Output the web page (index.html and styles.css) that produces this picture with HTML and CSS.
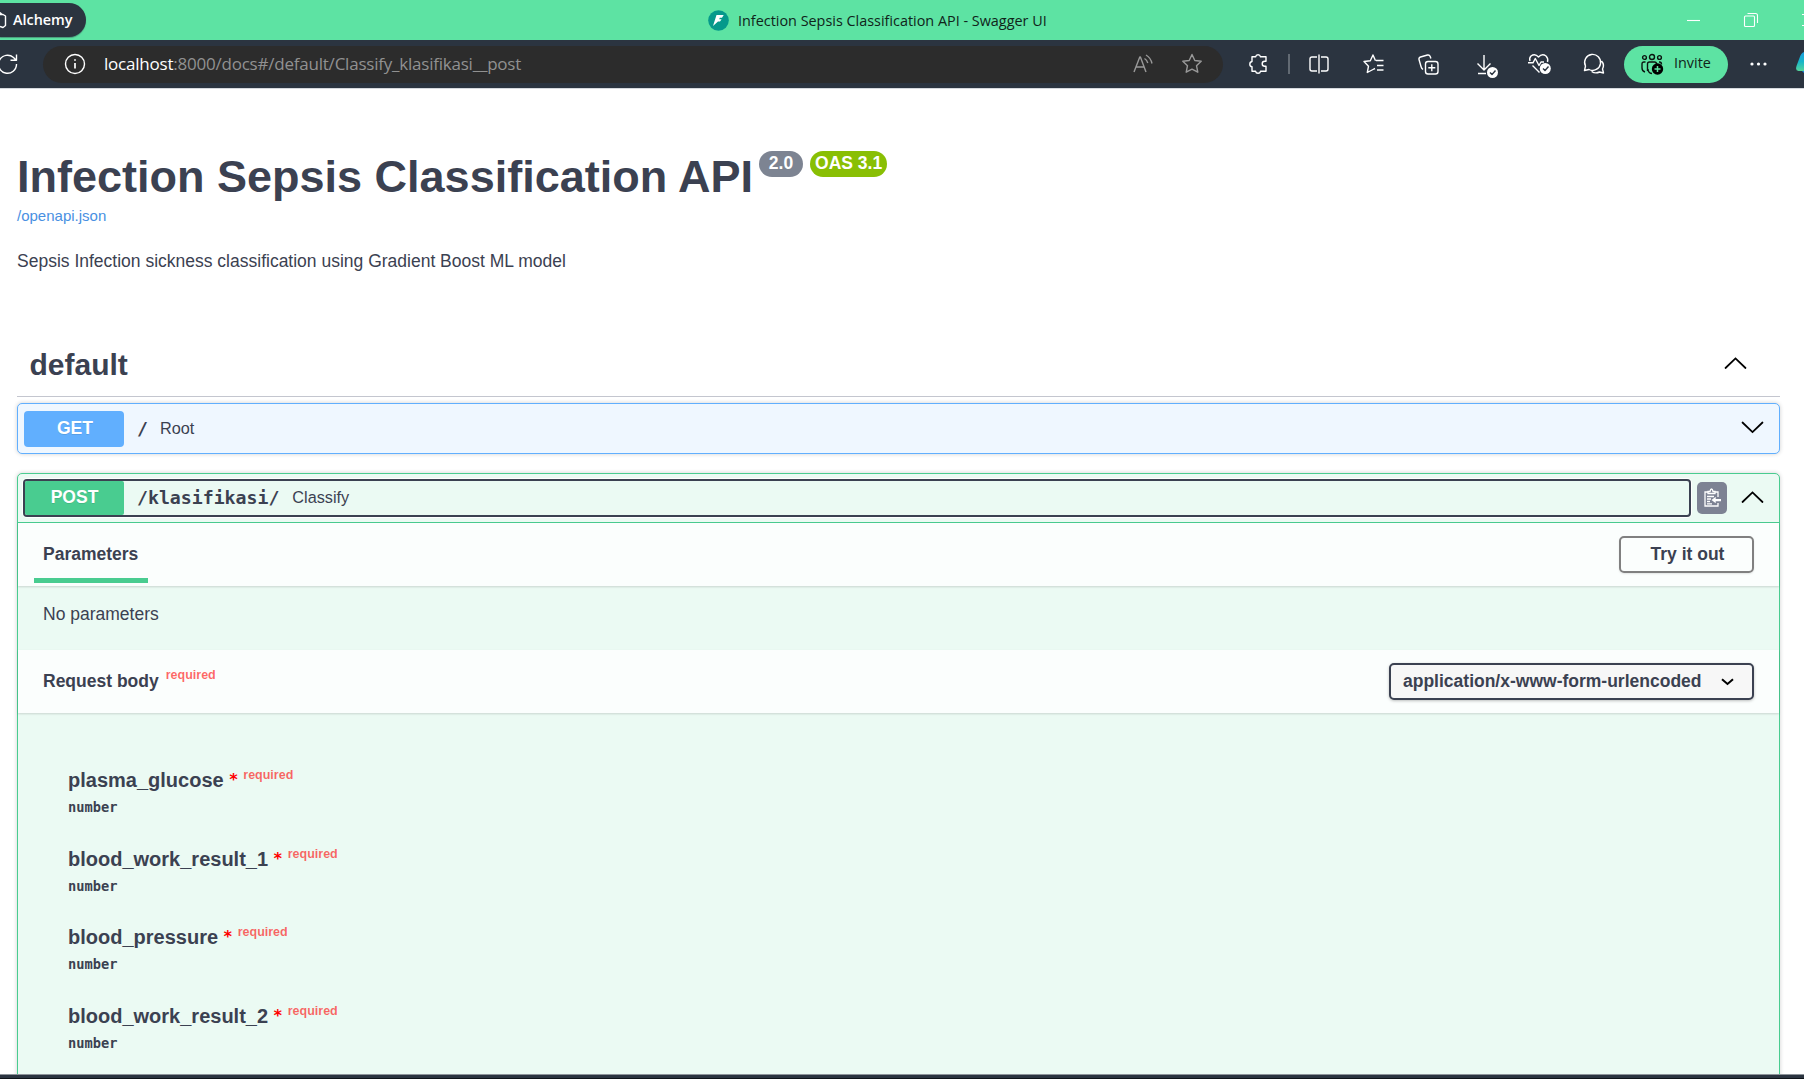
FILE: index.html
```
<!DOCTYPE html>
<html lang="en">
<head>
<meta charset="utf-8">
<title>Infection Sepsis Classification API - Swagger UI</title>
<link rel="stylesheet" href="styles.css">
</head>
<body>
<header class="titlebar">
  <div class="workspace">
    <svg class="ic" width="7" height="20" viewBox="0 0 7 20"><path d="M0 4.500 3 4.500 5.500 6v9.500l-2.500 2-3-1M0 2.500l2 2"/></svg>
    <span class="workspace-name">Alchemy</span>
  </div>
  <div class="tab-title">
    <svg width="21" height="21" viewBox="0 0 21 21"><circle cx="10.500" cy="10.500" r="10.300" fill="#05998b"/><path d="M8.500 5h7.200l-1.700 2.700h-2.200l-.6 1.600h2.400l-1.600 2.200h-2l-5 4.500z" fill="#fff"/></svg>
    <span class="tab-text">Infection Sepsis Classification API - Swagger UI</span>
  </div>
  <div class="window-buttons">
    <svg class="ic" width="13" height="14" viewBox="0 0 13 14"><path d="M0 7.500h13"/></svg>
    <svg class="ic" width="14" height="14" viewBox="0 0 14 14"><rect x=".5" y="3" width="10" height="10.500" rx="1"/><path d="M3.500.500h8Q13.500.500 13.500 2.500v7.500"/></svg>
    <svg class="ic" width="2" height="14" viewBox="0 0 2 14"><path d="M0 1.500h2M0 12.500h2"/></svg>
  </div>
</header>
<nav class="toolbar">
  <svg class="ic reload" width="19" height="22" viewBox="0 0 19 22"><path d="M17.500 11A9 9 0 1 1 14.500 4.500L17 7M17.500 1.500V7.300H11.500"/></svg>
  <div class="address">
    <svg class="ic" width="22" height="22" viewBox="0 0 22 22"><circle cx="11" cy="11" r="9.500"/><path d="M11 10v5.500M11 6.300v1.500" stroke-width="1.700"/></svg>
    <span class="url"><b class="host">localhost</b>:8000/docs#/default/Classify_klasifikasi__post</span>
    <svg class="ic dim" width="20" height="20" viewBox="0 0 20 20"><path d="M1 18 6.800 3h.6l5.600 15M3 13h8M11.500 4.500q2.600 1.700 3.300 4.500M13 1q4.800 2.800 6 8.500"/></svg>
    <svg class="ic dim star" width="22" height="22" viewBox="0 0 22 22"><path d="M11 1.500l2.800 6 6.400.8-4.700 4.400 1.300 6.500L11 16.100l-5.800 3.100 1.300-6.500L1.800 8.300l6.400-.8z"/></svg>
  </div>
  <svg class="ic i-puzzle" width="20" height="22" viewBox="0 0 20 22"><path d="M4 3.800h3.600a2.500 2.500 0 0 1 4.900 0H18v4.500h-1.300a2.500 2.500 0 0 0 0 5H18v5h-5.500a2.500 2.500 0 0 1-4.900 0H4v-4.500a2.700 2.700 0 0 1 0-5.300z"/></svg>
  <span class="divider"></span>
  <svg class="ic i-split" width="20" height="20" viewBox="0 0 20 20"><path d="M8 3H3Q1 3 1 5v10q0 2 2 2h5M12 3h5q2 0 2 2v10q0 2-2 2h-5M10 .5v19"/></svg>
  <svg class="ic i-favs" width="21" height="20" viewBox="0 0 21 20"><path d="M13 6.500H20.500M14 11.500h6.500M14 16h6.500M12.500 6.700 10 1 7.300 6.700 1 7.500l4.500 4.700L4.300 18.500 10 15.500l2-1"/></svg>
  <svg class="ic i-coll" width="21" height="21" viewBox="0 0 21 21"><rect x="7.500" y="7.500" width="12.500" height="12.500" rx="2.500"/><path d="M13.800 10.300v7M10.300 13.800h7M5 15.500Q3.500 14.500 3 12.500L1 5.500Q.7 3.500 2.500 3L9.500 1q2-.4 2.700 1.500l.7 2"/></svg>
  <svg class="ic i-down" width="22" height="24" viewBox="0 0 22 24"><path d="M8 1v14M1.500 9.500 8 16l6.500-6.500M2 19.500h8"/><circle class="badge-fill" cx="16.500" cy="18.500" r="5.500"/><path class="badge-tick" d="M14 18.500l2 2 3.500-4"/></svg>
  <svg class="ic i-heart" width="23" height="22" viewBox="0 0 23 22"><path d="M2 8Q1 5 3 3Q7 0 10.500 4Q14 0 18 3q2.500 2.500 1.500 6M0 9.800h5l2.300-4.300 3.700 7 2-3.500h3M4.500 12.500l7 7"/><circle class="badge-fill" cx="17.300" cy="15.500" r="5.500"/><path class="badge-tick" d="M15 15.500l2 2 3.500-4"/></svg>
  <svg class="ic i-chat" width="22" height="22" viewBox="0 0 22 22"><path d="M1.500 17.500 2.500 13A8 8 0 1 1 6 16.500zM18.500 8a7 7 0 0 1 1 8l1 4-4-1Q12.500 21 8.500 18.500"/></svg>
  <div class="invite">
    <svg class="ic" width="23" height="22" viewBox="0 0 23 22"><circle cx="3.500" cy="4.500" r="1.900"/><circle cx="11" cy="4" r="2.500"/><circle cx="18.500" cy="4.500" r="1.900"/><path d="M4.500 9H3Q1 9 1 11v4q0 3 3 4M6.500 18V11q0-2 2-2h5q2 0 2 2M7 16q0 4 4 4.500M18 9h.500q2 0 2 2.500"/><circle class="plus-fill" cx="16.500" cy="16" r="5.700"/><path class="plus" d="M16.500 13v6M13.500 16h6"/></svg>
    <span class="invite-text">Invite</span>
  </div>
  <svg class="i-dots" width="17" height="4" viewBox="0 0 17 4"><circle cx="2" cy="2" r="1.600"/><circle cx="8.500" cy="2" r="1.600"/><circle cx="15" cy="2" r="1.600"/></svg>
  <svg class="i-copilot" width="8" height="21" viewBox="0 0 8 21"><defs><linearGradient id="cp" x1="0" y1="0" x2="0" y2="1"><stop offset="0" stop-color="#1b9fe0"/><stop offset=".5" stop-color="#17b5c9"/><stop offset="1" stop-color="#55d69a"/></linearGradient></defs><path d="M8 0Q5 1 3.500 6L.5 14q-1.500 5 2 5H8z" fill="url(#cp)"/><path d="M6 19h2v2z" fill="#1482e6"/></svg>
</nav>
<main class="page">
  <section class="info">
    <h1 class="title">Infection Sepsis Classification API<span class="badges"><small class="version">2.0</small><small class="version oas">OAS 3.1</small></span></h1>
    <a class="spec-link">/openapi.json</a>
    <p class="description">Sepsis Infection sickness classification using Gradient Boost ML model</p>
  </section>
  <section class="tag">
    <h3 class="tag-head"><span class="tag-name">default</span><svg class="arrow" width="25" height="25" viewBox="0 0 20 20"><path d="M2 13.600 10 5.900l8 7.700"/></svg></h3>
    <div class="op get">
      <div class="op-head">
        <span class="method">GET</span><span class="path">/</span><span class="summary">Root</span>
        <svg class="arrow" width="25" height="25" viewBox="0 0 20 20"><path d="M2 6 10 13.700l8-7.700"/></svg>
      </div>
    </div>
    <div class="op post">
      <div class="op-head">
        <div class="focus"><span class="method">POST</span><span class="path">/klasifikasi/</span><span class="summary">Classify</span></div>
        <span class="copy"><svg width="19" height="20" viewBox="0 0 19 20"><path d="M5 4H2v14h13v-3M12 4h3v5M5 5.500h7V3.500H10Q9.500 1 8.500 1T7 3.500H5zM4 8.500h7M4 11h4M4 13.500h3M4 15.800h5" fill="none" stroke="#fff" stroke-width="1.300"/><path d="M8.500 12l4.200-3.200v2.100H18v2.300h-5.300v2.100z" fill="#fff"/></svg></span>
        <svg class="arrow" width="25" height="25" viewBox="0 0 20 20"><path d="M2 13.600 10 5.900l8 7.700"/></svg>
      </div>
      <div class="section-head"><h4 class="tab">Parameters</h4><button class="try">Try it out</button></div>
      <div class="no-params">No parameters</div>
      <div class="section-head body-head">
        <h4 class="body-title">Request body<span class="req">required</span></h4>
        <div class="select">application/x-www-form-urlencoded<svg width="13" height="8" viewBox="0 0 13 8"><path d="M1 1.200l5.500 4.800L12 1.200"/></svg></div>
      </div>
      <div class="fields">
        <div class="field"><div class="name">plasma_glucose<span class="ast">*</span><span class="req">required</span></div><div class="type">number</div></div>
        <div class="field"><div class="name">blood_work_result_1<span class="ast">*</span><span class="req">required</span></div><div class="type">number</div></div>
        <div class="field"><div class="name">blood_pressure<span class="ast">*</span><span class="req">required</span></div><div class="type">number</div></div>
        <div class="field"><div class="name">blood_work_result_2<span class="ast">*</span><span class="req">required</span></div><div class="type">number</div></div>
      </div>
    </div>
  </section>
</main>
<footer class="window-edge"></footer>
</body>
</html>
```
FILE: styles.css
```
* { box-sizing: border-box; }
body {
  margin: 0; width: 1804px; height: 1079px; overflow: hidden;
  display: flex; flex-direction: column; background: #fff; color: #3b4151;
  font-family: "Liberation Sans", Arial, sans-serif; font-size: 17.5px;
}
h1, h3, h4, p { margin: 0; }
svg { display: block; flex: none; }
span { white-space: nowrap; }
.ic { fill: none; stroke: #fff; stroke-width: 1.4; stroke-linejoin: round; overflow: visible; }

.titlebar {
  height: 40px; flex: none; background: #5de3a3; display: flex; align-items: center;
  justify-content: space-between; font-family: "Open Sans", sans-serif;
}
.workspace {
  width: 86px; height: 34px; background: #2b3440; border-radius: 0 17px 17px 0;
  display: flex; align-items: center; gap: 6px; color: #fff; box-shadow: 0 1px 1px #2b344066;
}
.workspace-name { font-size: 14.4px; font-weight: 600; line-height: 20px; }
.tab-title { display: flex; align-items: center; gap: 9px; margin-left: 622px; width: 340px; color: #10241a; }
.tab-text { padding-top: 1px; font-size: 14.4px; line-height: 20px; }
.window-buttons { display: flex; align-items: center; gap: 44px; margin-left: auto; }
.window-buttons .ic { stroke-width: 1.1; }

.toolbar {
  height: 49px; flex: none; background: #2b3440; border-bottom: 1px solid #d5d9de; display: flex; align-items: center;
  font-family: "Open Sans", sans-serif;
}
.reload { margin-left: -1px; }
.address {
  width: 1180px; height: 37px; margin-left: 25px; padding: 0 20px 0 21px; background: #2c2c2c; border-radius: 19px;
  display: flex; align-items: center;
}
.url { margin-left: 18px; margin-right: auto; padding-bottom: 1px; font-size: 17px; letter-spacing: -.22px; line-height: 24px; color: #919191; }
.host { font-weight: 400; color: #fff; }
.dim { stroke: #999; }
.star { margin-left: 28px; }
.i-puzzle { margin-left: 25px; }
.divider { width: 2px; height: 20px; margin-left: 20px; background: #626a73; }
.i-split { margin-left: 19px; }
.i-favs { margin-left: 34px; }
.i-coll { margin-left: 34px; }
.i-down { margin-left: 37px; margin-top: 3px; }
.i-heart { margin-left: 30px; }
.i-chat { margin-left: 32px; }
.badge-fill { fill: #fff; stroke: none; }
.badge-tick { stroke: #2b3440; }
.invite {
  width: 104px; height: 37px; margin-left: 19px; padding-left: 17px; border-radius: 19px; background: #5de3a3;
  display: flex; align-items: center; gap: 10px; color: #10241a;
}
.invite .ic { stroke: #0b1510; stroke-width: 1.4; }
.invite .plus-fill { fill: #000; stroke: none; }
.invite .plus { stroke: #5de3a3; stroke-width: 1.5; }
.invite-text { font-size: 14.4px; line-height: 20px; padding-bottom: 2px; }
.i-dots { margin-left: 22px; fill: #fff; }
.i-copilot { margin-left: auto; margin-bottom: 4px; }

.page { flex: 1; min-height: 0; overflow: hidden; padding: 62px 24px 0 17px; }
.title { display: flex; align-items: flex-start; font-size: 45px; line-height: 52px; }
.badges { display: flex; gap: 7px; margin-left: 6px; }
.version {
  height: 26px; padding: 0 5px; min-width: 44px; text-align: center; border-radius: 13px; background: #7d8492;
  color: #fff; font-size: 17.5px; line-height: 25px;
}
.oas { background: #89bf04; }
.spec-link { display: block; margin-top: 4px; font-size: 15px; line-height: 18px; color: #4990e2; }
.description { margin-top: 25px; line-height: 22px; }
.tag { margin-top: 58px; }
.tag-head {
  height: 67px; padding: 0 32px 0 12.5px; border-bottom: 1px solid #c4c6cf; display: flex; align-items: center;
  justify-content: space-between; font-size: 30px; line-height: 36px;
}
.tag-name { padding-top: 3px; }
.arrow { fill: none; stroke: #000; stroke-width: 1.4; stroke-linecap: round; }
.op { border: 1px solid; border-radius: 5px; box-shadow: 0 0 4px rgba(0,0,0,.19); }
.get { margin-top: 6px; height: 51px; border-color: #61affe; background: #eff7ff; }
.post { margin-top: 19px; height: 700px; border-color: #49cc90; background: #ebfaf3; }
.op-head { height: 49px; padding: 0 14px 0 6px; display: flex; align-items: center; }
.op-head .arrow { margin-bottom: 2px; }
.method {
  width: 100px; height: 36px; border-radius: 4px; background: #61affe; color: #fff; font-weight: 700;
  line-height: 34px; text-align: center; text-indent: 2px; text-shadow: 0 1px 0 rgba(0,0,0,.1);
}
.path { margin-left: 13px; font: 700 18.2px/24px "DejaVu Sans Mono", monospace; }
.summary { margin-left: 13px; font-size: 16.25px; }
.get .summary { margin-left: 12px; }
.get .arrow { margin-left: auto; }
.post .op-head { padding-left: 5px; border-bottom: 1px solid #49cc90; }
.focus {
  width: 1668px; height: 38px; border: 2px solid #3b4151; border-radius: 4px; display: flex; align-items: center;
  box-shadow: 0 0 0 1px #fff;
}
.focus .method { width: 99px; height: 34px; background: #49cc90; border-radius: 2px; line-height: 33px; text-indent: 0; }
.focus .path, .focus .summary { padding-bottom: 1px; }
.copy {
  width: 30px; height: 32px; margin-left: 6px; margin-right: auto; background: #7d8293; border-radius: 5px;
  display: flex; align-items: center; justify-content: center;
}
.section-head {
  height: 63px; padding: 0 25px 0 16px; background: rgba(255,255,255,.8); box-shadow: 0 1px 2px rgba(0,0,0,.15);
  display: flex; align-items: center; justify-content: space-between;
}
.tab { width: 114px; height: 60px; padding: 19px 9px 0; border-bottom: 5px solid #49cc90; align-self: flex-start; line-height: 24px; font-size: 17.5px; }
.try {
  width: 135px; height: 37px; padding: 0 0 0 2px; border: 2px solid gray; border-radius: 5px; background: transparent;
  box-shadow: 0 1px 2px rgba(0,0,0,.1); color: #3b4151; font: 700 17.5px "Liberation Sans", Arial, sans-serif;
}
.no-params { height: 64px; padding: 17px 25px; line-height: 22px; }
.body-head { padding-left: 25px; }
.body-title { display: flex; align-items: center; font-size: 17.5px; line-height: 22px; padding-bottom: 2px; }
.req { font-size: 12.5px; line-height: 14px; color: rgba(255,0,0,.6); }
.body-title .req { margin: 0 0 11px 7px; font-weight: 700; }
.select {
  width: 365px; height: 37px; padding: 0 18px 0 12px; border: 2px solid #3b4151; border-radius: 5px; background: #f7f7f7;
  box-shadow: 0 1px 3px rgba(0,0,0,.25); display: flex; align-items: center; justify-content: space-between; font-weight: 700;
}
.select svg { fill: none; stroke: #000; stroke-width: 2; margin-top: 1px; }
.fields { padding: 56px 50px 0; }
.field { height: 78.6px; }
.name { display: flex; align-items: flex-start; height: 30px; font-size: 20px; font-weight: 700; line-height: 23px; }
.ast { margin-left: 5px; font: 700 16px/22px "DejaVu Sans Mono", monospace; color: #f00; }
.name .req { margin: -1px 0 0 5px; font-weight: 700; }
.type { font: 700 13.7px/16px "DejaVu Sans Mono", monospace; }
.window-edge { height: 5px; flex: none; background: #2b3440; border-top: 1px solid #8d9399; border-bottom: 1px solid #0e1318; }
```
